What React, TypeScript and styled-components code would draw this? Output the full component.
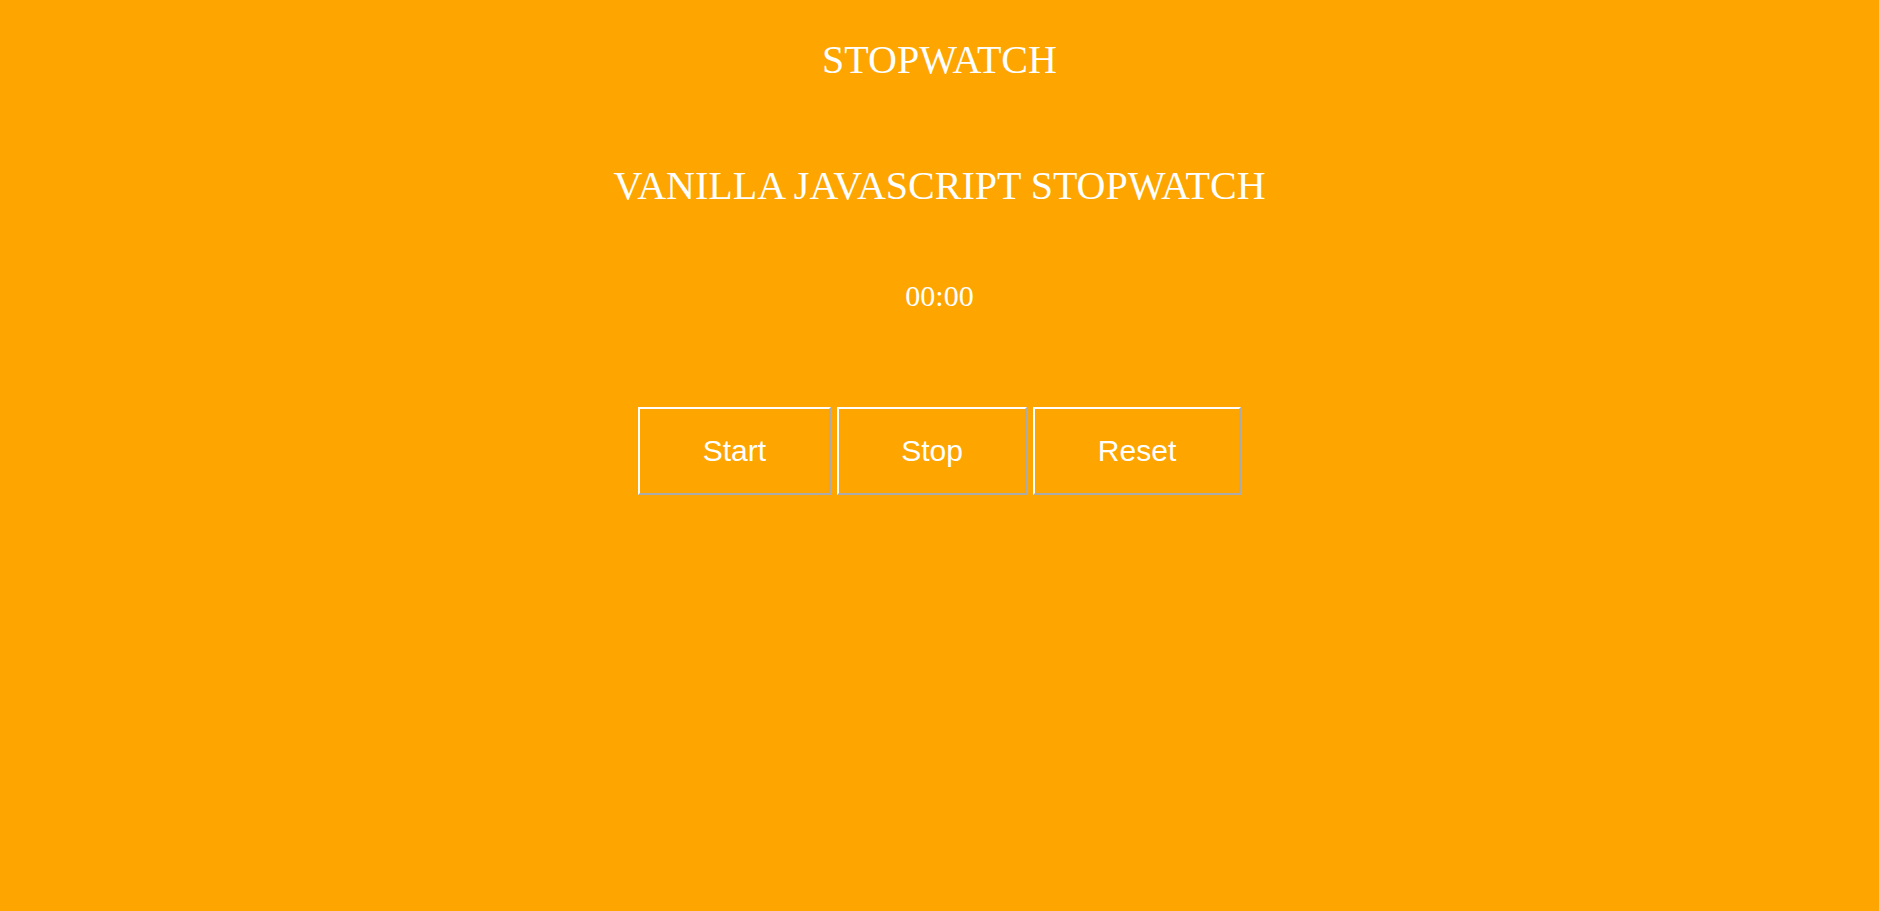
import React from "react";
import styled, { createGlobalStyle } from "styled-components";

const GlobalStyle = createGlobalStyle`
  html, body {
    margin: 0;
    padding: 0;
    background: #ffa500;
    min-height: 100%;
  }
  body {
    font-family: "Liberation Serif", "Times New Roman", serif;
    color: #ffffff;
  }
`;

const Page = styled.main`
  min-height: 911px;
  background: #ffa500;
  display: flex;
  flex-direction: column;
  align-items: center;
  padding-top: 36px;
  box-sizing: border-box;
`;

const Title = styled.h1`
  margin: 0;
  font-family: "Liberation Serif", "Times New Roman", serif;
  font-weight: 400;
  font-size: 40px;
  line-height: normal;
  color: #ffffff;
`;

const Subtitle = styled.h2`
  margin: 79px 0 0;
  font-family: "Liberation Serif", "Times New Roman", serif;
  font-weight: 400;
  font-size: 40px;
  line-height: normal;
  color: #ffffff;
`;

const Time = styled.p`
  margin: 69.8px 0 0;
  font-family: "Liberation Serif", "Times New Roman", serif;
  font-size: 30px;
  line-height: normal;
  color: #ffffff;
`;

const ButtonRow = styled.div`
  margin-top: 94px;
  display: flex;
  gap: 6px;
`;

const Button = styled.button`
  font-family: "Liberation Sans", Arial, sans-serif;
  font-size: 30px;
  line-height: normal;
  color: #ffffff;
  background: transparent;
  padding: 25px 62.5px;
  margin: 0;
  border-width: 2px;
  border-style: solid;
  border-color: #ffffff #ababab #ababab #ffffff;
  cursor: pointer;
`;

export default function App() {
  return (
    <>
      <GlobalStyle />
      <Page>
        <Title>STOPWATCH</Title>
        <Subtitle>VANILLA JAVASCRIPT STOPWATCH</Subtitle>
        <Time>00:00</Time>
        <ButtonRow>
          <Button>Start</Button>
          <Button>Stop</Button>
          <Button>Reset</Button>
        </ButtonRow>
      </Page>
    </>
  );
}
